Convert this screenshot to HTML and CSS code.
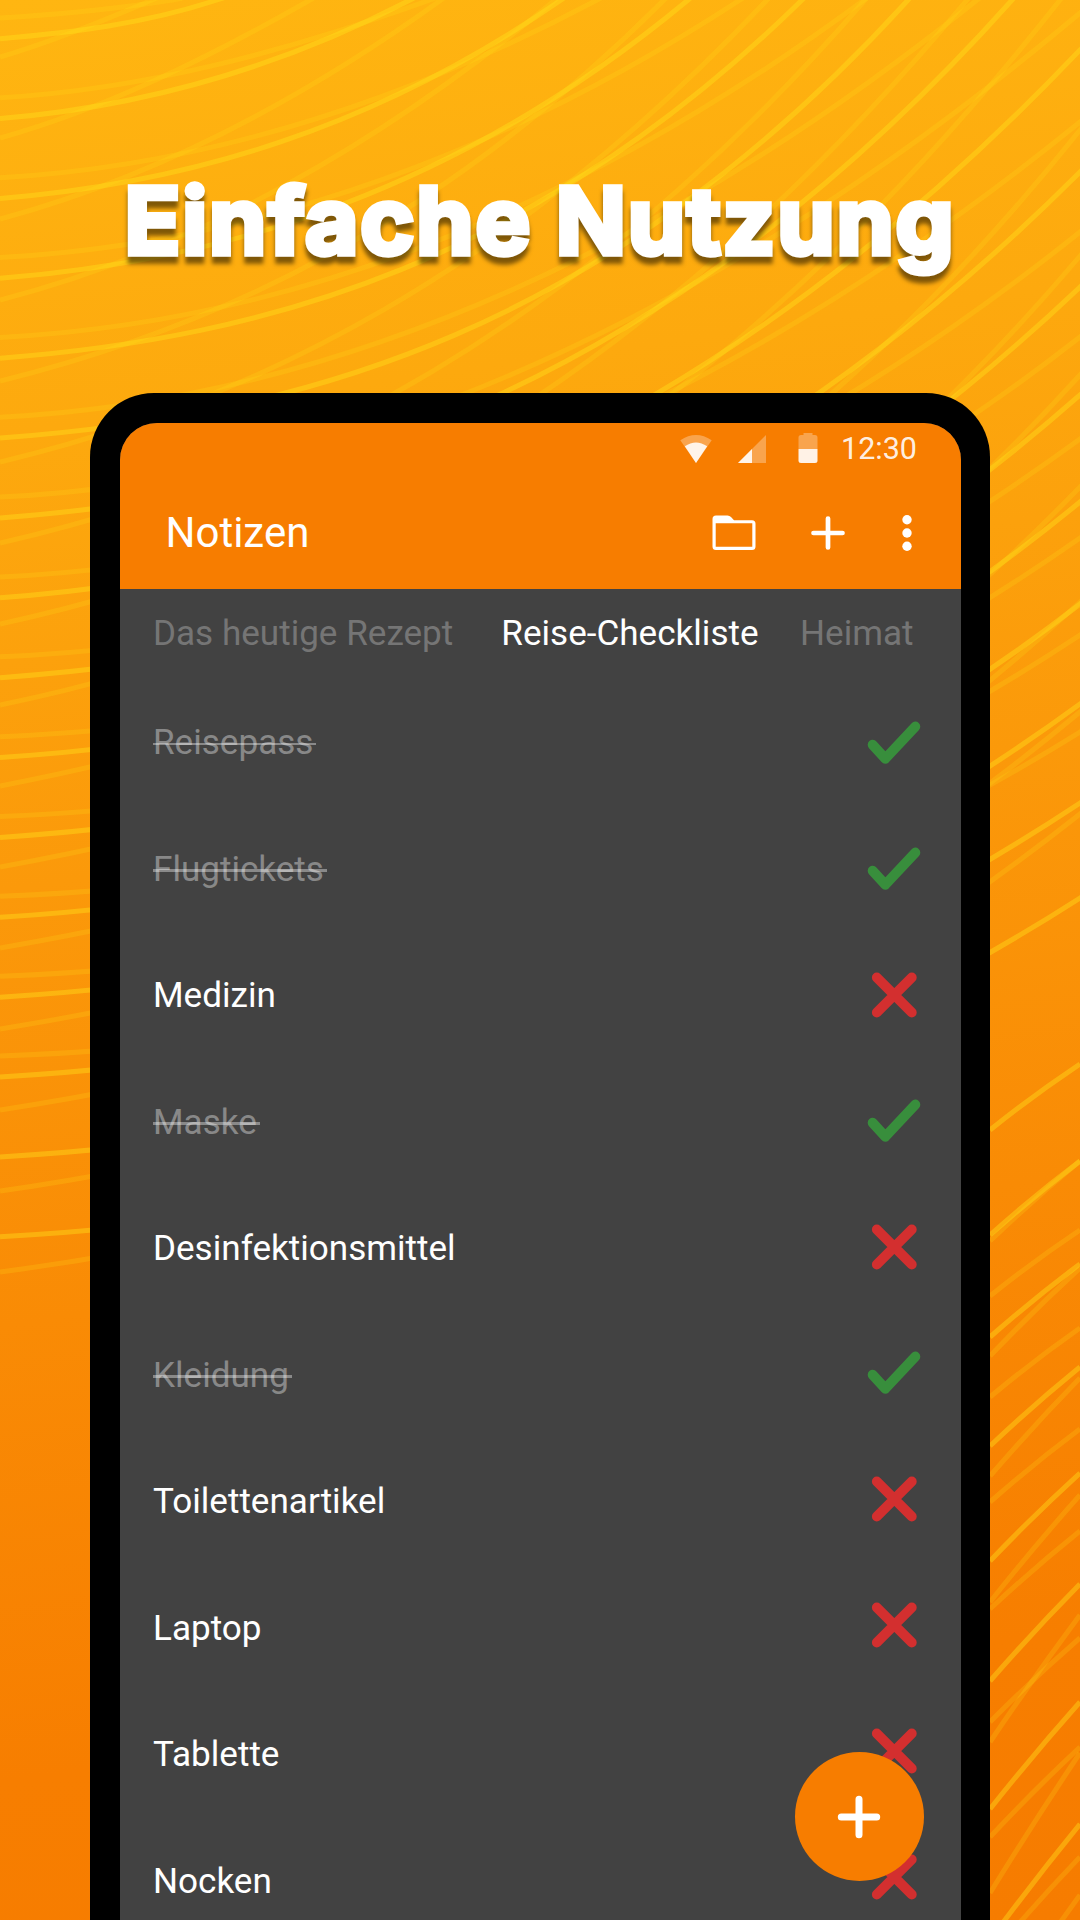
FILE: index.html
```html
<!DOCTYPE html>
<html lang="de">
<head>
<meta charset="utf-8">
<title>Einfache Nutzung</title>
<link rel="stylesheet" href="styles.css">
</head>
<body>
<svg width="0" height="0" class="sprite">
  <symbol id="check" viewBox="0 0 60 60"><path d="M8.7 31.8 21.3 45.7 51.3 13.6" fill="none" stroke="#388e3c" stroke-width="10" stroke-linecap="round" stroke-linejoin="round"/></symbol>
  <symbol id="cross" viewBox="0 0 60 60"><path d="M12.8 12.5 47.8 47.5M47.8 12.5 12.8 47.5" fill="none" stroke="#d32f2f" stroke-width="9.8" stroke-linecap="round"/></symbol>
</svg>
<main class="poster">
  <svg class="waves" id="waves" viewBox="0 0 1080 1920" width="1080" height="1920"></svg>
  <h1 class="headline">Einfache Nutzung</h1>
  <section class="phone">
    <div class="screen">
      <header class="top">
        <div class="status">
          <svg width="32" height="30" viewBox="0 0 32 30"><path d="M.3 6.3Q16-4.2 31.7 6.3L16 29Z" fill="#fff" opacity=".3"/><path d="M4.8 12.2Q16 4.6 27.2 12.2L16 29Z" fill="#fff" opacity=".88"/></svg>
          <svg class="signal" width="30" height="30" viewBox="0 0 30 30"><path d="M1 29 29 1V29Z" fill="#fff" opacity=".3"/><path d="M1 29 15 15V29Z" fill="#fff" opacity=".88"/></svg>
          <svg class="battery" width="20" height="31" viewBox="0 0 20 31"><path d="M5.5 0H14.500V2H17Q19.500 2 19.500 4.500V16H.5V4.500Q.5 2 3 2H5.500Z" fill="#fff" opacity=".3"/><path d="M.5 16H19.500V27.500Q19.500 30 17 30H3Q.5 30 .5 27.500Z" fill="#fff" opacity=".9"/></svg>
          <span class="clock">12:30</span>
        </div>
        <div class="bar">
          <h2 class="title">Notizen</h2>
          <svg width="44" height="36" viewBox="0 0 44 36"><path d="M.5 4Q.5 .5 4 .5H15.500Q17.500 .5 19 2L22 5.200H40Q43.500 5.200 43.500 8.700V31.500Q43.500 35 40 35H4Q.5 35 .5 31.500ZM3.700 8.300V31.800H40.300V8.300Z" fill="#fff" fill-rule="evenodd"/></svg>
          <svg class="add" width="36" height="36" viewBox="0 0 36 36"><path d="M18 3.500V32.500M3.500 18H32.500" stroke="#fff" stroke-width="4.700" stroke-linecap="round"/></svg>
          <svg class="more" width="12" height="38" viewBox="0 0 12 38"><g fill="#fff"><circle cx="6" cy="5.700" r="4.700"/><circle cx="6" cy="19" r="4.700"/><circle cx="6" cy="32.300" r="4.700"/></g></svg>
        </div>
      </header>
      <nav class="tabs"><span>Das heutige Rezept</span><span class="active">Reise-Checkliste</span><span>Heimat</span></nav>
      <div class="list">
        <ul class="names">
          <li class="done"><span>Reisepass</span></li>
          <li class="done"><span>Flugtickets</span></li>
          <li><span>Medizin</span></li>
          <li class="done"><span>Maske</span></li>
          <li><span>Desinfektionsmittel</span></li>
          <li class="done"><span>Kleidung</span></li>
          <li><span>Toilettenartikel</span></li>
          <li><span>Laptop</span></li>
          <li><span>Tablette</span></li>
          <li><span>Nocken</span></li>
        </ul>
        <div class="marks">
          <svg><use href="#check"/></svg>
          <svg><use href="#check"/></svg>
          <svg><use href="#cross"/></svg>
          <svg><use href="#check"/></svg>
          <svg><use href="#cross"/></svg>
          <svg><use href="#check"/></svg>
          <svg><use href="#cross"/></svg>
          <svg><use href="#cross"/></svg>
          <svg><use href="#cross"/></svg>
          <svg><use href="#cross"/></svg>
        </div>
      </div>
      <div class="fab"><svg width="44" height="44" viewBox="0 0 44 44"><path d="M22 4.300V39.700M4.300 22H39.700" stroke="#fff" stroke-width="7" stroke-linecap="round"/></svg></div>
    </div>
  </section>
</main>
<script src="waves.js"></script>
</body>
</html>
```
FILE: styles.css
```css
* { box-sizing: border-box; }
body { margin: 0; font-family: Roboto, sans-serif; }
.sprite { position: absolute; }
.poster {
  position: relative;
  display: flex;
  flex-direction: column;
  align-items: center;
  width: 1080px;
  height: 1920px;
  overflow: hidden;
  background: linear-gradient(172deg, #ffb611 0%, #fda90e 21%, #fb990a 43%, #f98b05 64%, #f77e00 86%, #f67c00 100%);
}
.waves { position: absolute; inset: 0; }
.headline {
  position: relative;
  flex: none;
  margin: 0;
  height: 393px;
  padding-top: 161px;
  font: 700 92px/120px Inter, sans-serif;
  letter-spacing: 1.900px;
  white-space: nowrap;
  color: #fff;
  -webkit-text-stroke: 5.500px #fff;
  paint-order: stroke fill;
  stroke-linejoin: round;
  filter: drop-shadow(0 7px 2px rgba(0, 0, 0, .5));
}
.phone {
  position: relative;
  flex: none;
  width: 900px;
  height: 1600px;
  padding: 29.500px 29.500px 0;
  background: #000;
  border-radius: 64px 64px 0 0;
}
.screen {
  position: relative;
  height: 1600px;
  background: #424242;
  border-radius: 37px 37px 0 0;
  overflow: hidden;
}
.top { height: 166.500px; background: #f77d00; }
.status {
  display: flex;
  align-items: flex-end;
  height: 41px;
  padding-left: 560.500px;
}
.signal { margin-left: 25px; }
.battery { margin-left: 31px; }
.clock {
  margin: 0 0 -3px 23px;
  font-size: 30.500px;
  line-height: 36px;
  color: rgba(255, 255, 255, .9);
}
.bar {
  display: flex;
  align-items: center;
  height: 60px;
  margin-top: 39px;
  padding-left: 46px;
}
.title {
  width: 546.800px;
  margin: 0;
  font-size: 42px;
  font-weight: 400;
  line-height: 60px;
  color: #fff;
}
.add { margin-left: 53.500px; }
.more { margin-left: 55px; }
.tabs {
  display: flex;
  height: 90px;
  padding: 22.500px 0 0 33.500px;
  gap: 41.500px;
  font-size: 35.100px;
  line-height: 42px;
  color: #757575;
  white-space: nowrap;
}
.tabs .active { margin-left: 6.500px; color: #fff; }
.list {
  display: flex;
  justify-content: space-between;
  padding: 0 37px 0 33.500px;
}
.names {
  margin: 0;
  padding: 0;
  list-style: none;
  font-size: 35.100px;
  color: #fff;
}
.names li {
  display: flex;
  align-items: center;
  height: 126.500px;
}
.marks {
  display: flex;
  flex-direction: column;
  gap: 66px;
  padding-top: 33.500px;
}
.marks svg { width: 60px; height: 60px; }
.done span { position: relative; color: rgba(255, 255, 255, .38); }
.done span::after {
  content: "";
  position: absolute;
  left: 0;
  right: -3px;
  top: 21.500px;
  height: 2.500px;
  background: rgba(255, 255, 255, .38);
}
.fab {
  position: absolute;
  left: 675px;
  top: 1329.500px;
  display: flex;
  align-items: center;
  justify-content: center;
  width: 129px;
  height: 129px;
  border-radius: 50%;
  background: #f77d00;
}
.line { fill: none; stroke: #ffe01a; stroke-width: 5; }
.bright { stroke-opacity: .42; }
.faint { stroke-opacity: .2; }
```
FILE: waves.js
```js
// Each row is one curve: end x, end y, end slope. Curves start on the left edge.
const families = [
  { cls: "bright", y0: 38.7, step: 79.87, s0: 0.085, s1: 0.055, ends: [
    [217, 0, .33], [410, 0, .52], [561, 0, .69], [688, 0, .83], [802, 0, .98], [908, 0, 1.1],
    [1012, 0, 1.12], [1080, 50, 1.05], [1080, 172, 1], [1080, 287, .95], [1080, 395, .88],
    [1080, 502, .82], [1080, 604, .77], [1080, 704, .73], [1080, 803, .66], [1080, 898, .64]] },
  { cls: "faint", y0: 18, step: 79.85, s0: 0.06, s1: 0.03, ends: [
    [172, 0, .16], [430, 0, .36], [597, 0, .53], [740, 0, .65], [864, 0, .74], [977, 0, .8],
    [1080, 13, .84], [1080, 122, .81], [1080, 232, .8], [1080, 337, .78], [1080, 439, .73],
    [1080, 538, .7], [1080, 635, .66], [1080, 732, .62]] },
  { cls: "faint", y0: 57, step: 81, s0: 0.29, s1: 0.13, ends: [
    [152, 0, .43], [310, 0, .57], [441, 0, .72], [555, 0, .83], [664, 0, 1], [767, 0, 1.06],
    [865, 0, 1.15], [967, 0, 1.2], [1060, 0, 1.27], [1080, 130, 1.25], [1080, 256, 1.18],
    [1080, 375, 1.1], [1080, 487, 1.03], [1080, 602, .92], [1080, 712, .83], [1080, 814, .79]] }
];
// Short arcs on the lower right: y at x=990, y at x=1080.
const arcs = {
  bright: [[1130, 1064], [1235, 1161], [1337, 1264], [1446, 1367], [1561, 1473], [1681, 1584], [1809, 1702], [1940, 1824]],
  faint: [[1296, 1230], [1397, 1328], [1502, 1429], [1609, 1531], [1722, 1638], [1837, 1747], [1957, 1857],
    [1241, 1161], [1356, 1268], [1476, 1378], [1602, 1495], [1742, 1615], [1893, 1753], [2025, 1895]]
};
const svg = document.getElementById("waves");
function line(cls, d) {
  const p = document.createElementNS("http://www.w3.org/2000/svg", "path");
  p.setAttribute("class", "line " + cls);
  p.setAttribute("d", d);
  svg.appendChild(p);
}
for (const f of families) {
  f.ends.forEach(([x, y, s], k) => {
    const y0 = f.y0 + f.step * k;
    const s0 = f.s0 + (f.s1 - f.s0) * k / 15;
    const h = x / 3;
    line(f.cls, `M0 ${y0}C${h} ${y0 - s0 * h} ${x - h} ${y + s * h} ${x} ${y}L${x + 10} ${y - s * 10}`);
  });
}
for (const cls in arcs) {
  for (const [a, b] of arcs[cls]) line(cls, `M990 ${a}Q1035 ${(a + b) / 2 - 3} 1080 ${b}`);
}
```
